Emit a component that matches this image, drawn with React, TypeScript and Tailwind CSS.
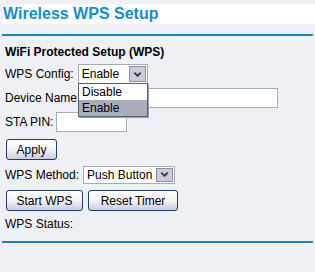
import { ChevronDown } from "lucide-react";

function FakeSelect({ value, width, height }: { value: string; width: string; height: string }) {
  return (
    <div className={`flex items-stretch border border-[#a5acb2] bg-white ${width} ${height}`}>
      <span className="flex-1 pl-[3px] leading-none flex items-center text-[12px]">{value}</span>
      <span className="m-[1px] flex w-[17px] items-center justify-center border border-[#8a8fa3] bg-[#c9cbd8]">
        <ChevronDown className="size-[11px] text-[#2e3347]" strokeWidth={4} />
      </span>
    </div>
  );
}

function Btn({ label, width }: { label: string; width: string }) {
  return (
    <button
      className={`h-[21px] ${width} rounded-[3px] border border-[#1d3c66] bg-gradient-to-b from-white via-[#f3f4f9] to-[#c9ccda] text-[12px] leading-none text-black`}
    >
      {label}
    </button>
  );
}

export default function App() {
  return (
    <div className="relative h-[272px] w-[315px] bg-[#eff0f6] font-['Liberation_Sans',Arial,sans-serif] text-[12px] text-black">
      <div className="pt-[4px]">
        <div className="ml-[2px] h-[20px] bg-white pl-[1px] text-[16px] font-bold leading-[20px] text-[#158ccc]">
          Wireless WPS Setup
        </div>
      </div>
      <div className="mx-[2px] mt-[10px] h-[2px] bg-[#1a83b4]" />

      <div className="pl-[5px] pt-[9px]">
        <div className="pl-[-1px] text-[12px] font-bold leading-[14px]">WiFi Protected Setup (WPS)</div>

        <div className="mt-[5px] flex h-[20px] items-center gap-[4px]">
          <span>WPS Config:</span>
          <FakeSelect value="Enable" width="w-[70px]" height="h-[20px]" />
        </div>

        <div className="mt-[4px] flex h-[20px] items-center gap-[3px]">
          <span>Device Name:</span>
          <div className="h-[20px] w-[195px] border border-[#a5acb2] bg-white" />
        </div>

        <div className="mt-[4px] flex h-[20px] items-center gap-[3px]">
          <span>STA PIN:</span>
          <div className="h-[20px] w-[71px] border border-[#a5acb2] bg-white" />
        </div>

        <div className="mt-[7px] pl-[1px]">
          <Btn label="Apply" width="w-[51px]" />
        </div>

        <div className="mt-[4px] flex h-[21px] items-center gap-[4px]">
          <span>WPS Method:</span>
          <FakeSelect value="Push Button" width="w-[92px]" height="h-[18px]" />
        </div>

        <div className="mt-[5px] flex gap-[5px] pl-[1px]">
          <Btn label="Start WPS" width="w-[77px]" />
          <Btn label="Reset Timer" width="w-[90px]" />
        </div>

        <div className="mt-[6px] leading-[14px]">WPS Status:</div>
      </div>

      <div className="mx-[2px] mt-[10px] h-[2px] bg-[#1a83b4]" />

      <div className="absolute left-[78px] top-[83px] w-[70px] border border-[#5b5f6e] bg-white shadow-[1px_1px_0_#9a9cab]">
        <div className="h-[16px] pl-[3px] leading-[16px]">Disable</div>
        <div className="h-[16px] bg-[#a9acba] pl-[3px] leading-[16px]">Enable</div>
      </div>
    </div>
  );
}
